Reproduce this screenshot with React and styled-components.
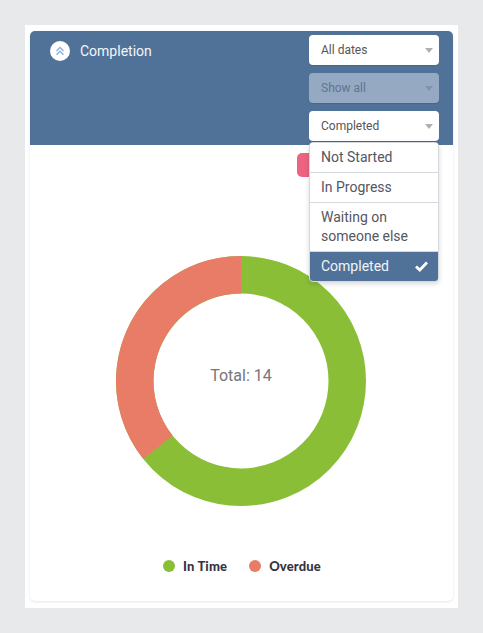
import styled, { createGlobalStyle } from "styled-components";

const GlobalStyle = createGlobalStyle`
    html, body {
        margin: 0;
        background: #e8e9eb;
        font-family: Roboto, "Liberation Sans", sans-serif;
    }
`

const Page = styled.div`
    width: 483px;
    height: 633px;
    padding: 25px;
    box-sizing: border-box;
    overflow: hidden;
`

const Panel = styled.div`
    width: 433px;
    height: 583px;
    padding: 6px 5px;
    box-sizing: border-box;
    background: white;
`

const Card = styled.div`
    height: 570px;
    border-radius: 5px;
    background: white;
    box-shadow: 0 1px 3px rgba(0, 0, 0, 0.1);
`

const Header = styled.div`
    height: 114px;
    padding: 4px 14px 0 20px;
    box-sizing: border-box;
    display: flex;
    justify-content: space-between;
    background: #507299;
    border-radius: 5px 5px 0 0;
`

const Title = styled.div`
    display: flex;
    align-items: center;
    gap: 10px;
    height: 20px;
    margin-top: 6px;
    color: #f4f6f9;
    font-size: 14px;
    font-weight: 400;
`

const ToggleIcon = styled.span`
    width: 20px;
    height: 20px;
    border-radius: 50%;
    background: white;
    display: flex;
    align-items: center;
    justify-content: center;
`

const Filters = styled.div`
    display: flex;
    flex-direction: column;
    gap: 8px;
    width: 130px;
`

const SelectWrap = styled.div`
    position: relative;
`

const Select = styled.div`
    height: 30px;
    padding: 0 11px 0 12px;
    box-sizing: border-box;
    display: flex;
    align-items: center;
    justify-content: space-between;
    border-radius: 4px;
    font-size: 12px;
    color: ${(p) => (p.$disabled ? "#5d7594" : "#555")};
    background: ${(p) => (p.$disabled ? "#95a9c2" : "white")};
    box-shadow: 0 1px 1px rgba(0, 0, 0, 0.1);
`

const Caret = styled.i`
    width: 0;
    height: 0;
    margin-right: -5px;
    border-left: 4px solid transparent;
    border-right: 4px solid transparent;
    border-top: 5px solid ${(p) => (p.$disabled ? "#7f93ad" : "#b0b0b0")};
`

const Menu = styled.ul`
    position: absolute;
    top: 31px;
    left: 0;
    width: 130px;
    margin: 0;
    padding: 0;
    box-sizing: border-box;
    list-style: none;
    background: white;
    border: 1px solid #d5d8dc;
    border-radius: 4px;
    overflow: hidden;
    box-shadow: 0 2px 5px rgba(0, 0, 0, 0.15);
    z-index: 2;
`

const MenuItem = styled.li`
    padding: 5px 10px 5px 11px;
    display: flex;
    align-items: center;
    justify-content: space-between;
    font-size: 14px;
    line-height: 19px;
    color: ${(p) => (p.$active ? "#f0f4f8" : "#55565f")};
    background: ${(p) => (p.$active ? "#507299" : "white")};
    border-top: ${(p) => (p.$first ? "none" : "1px solid #d5d8dc")};
`

const Body = styled.div`
    padding-top: 8px;
    display: flex;
    flex-direction: column;
    align-items: center;
`

const Toolbar = styled.div`
    align-self: stretch;
    display: flex;
    justify-content: flex-end;
    padding-right: 60px;
`

const ActionButton = styled.div`
    width: 96px;
    height: 24px;
    border-radius: 5px;
    background: #ec6480;
`

const Chart = styled.div`
    position: relative;
    width: 250px;
    height: 250px;
    margin-top: 79px;
    margin-left: -1px;
`

const Total = styled.div`
    position: absolute;
    inset: 0 0 11px 0;
    display: flex;
    align-items: center;
    justify-content: center;
    font-size: 16px;
    color: #77757c;
`

const Legend = styled.div`
    display: flex;
    gap: 22px;
    margin-top: 52px;
    margin-left: 1px;
`

const LegendItem = styled.div`
    display: flex;
    align-items: center;
    gap: 8px;
    font-family: Lato, sans-serif;
    font-weight: 900;
    font-size: 13px;
    letter-spacing: 0.15px;
    color: #34343f;
`

const Dot = styled.span`
    width: 12px;
    height: 12px;
    border-radius: 50%;
    background: ${(p) => p.$color};
`

const menuItems = ["Not Started", "In Progress", "Waiting on someone else", "Completed"];

// stroke ring: r = 106.25, width = 37.5
const circumference = 2 * Math.PI * 106.25;
const overdueLength = (circumference * 5) / 14;

const App = () => {
    return (
        <Page>
            <GlobalStyle />
            <Panel>
                <Card>
                    <Header>
                        <Title>
                            <ToggleIcon>
                                <svg width="12" height="12" viewBox="0 0 12 12" fill="none" stroke="#8fb0dc" strokeWidth="1.4">
                                    <path d="M2.5 6 L6 2.5 L9.5 6" />
                                    <path d="M2.5 9.8 L6 6.3 L9.5 9.8" />
                                </svg>
                            </ToggleIcon>
                            Completion
                        </Title>
                        <Filters>
                            <Select>All dates<Caret /></Select>
                            <Select $disabled>Show all<Caret $disabled /></Select>
                            <SelectWrap>
                                <Select>Completed<Caret /></Select>
                                <Menu>
                                    {menuItems.map((item, i) => (
                                        <MenuItem key={item} $first={i === 0} $active={item === "Completed"}>
                                            {item}
                                            {item === "Completed" && (
                                                <svg width="13" height="11" viewBox="0 0 13 11" fill="none" stroke="white" strokeWidth="2.8">
                                                    <path d="M1 5.5 L4.8 9 L12 1.5" />
                                                </svg>
                                            )}
                                        </MenuItem>
                                    ))}
                                </Menu>
                            </SelectWrap>
                        </Filters>
                    </Header>
                    <Body>
                        <Toolbar>
                            <ActionButton />
                        </Toolbar>
                        <Chart>
                            <svg width="250" height="250" viewBox="0 0 250 250">
                                <circle cx="125" cy="125" r="106.25" fill="none" stroke="#8abe37" strokeWidth="37.5" />
                                <circle
                                    cx="125"
                                    cy="125"
                                    r="106.25"
                                    fill="none"
                                    stroke="#e97c66"
                                    strokeWidth="37.5"
                                    strokeDasharray={`${overdueLength} ${circumference}`}
                                    transform={`rotate(${-90 - (360 * 5) / 14} 125 125)`}
                                />
                            </svg>
                            <Total>Total: 14</Total>
                        </Chart>
                        <Legend>
                            <LegendItem><Dot $color="#8abe37" />In Time</LegendItem>
                            <LegendItem><Dot $color="#e97c66" />Overdue</LegendItem>
                        </Legend>
                    </Body>
                </Card>
            </Panel>
        </Page>
    );
}

export default App;
